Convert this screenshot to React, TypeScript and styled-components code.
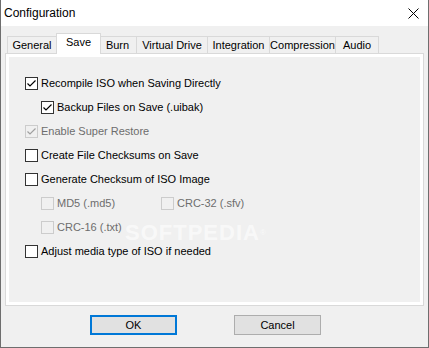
import React from "react";
import styled, {createGlobalStyle} from "styled-components";

const Global = createGlobalStyle`
  body {
    margin: 0;
    background: #f0f0f0;
    font-family: "Liberation Sans", Arial, sans-serif;
  }
`;

const Window = styled.div`
  width: 429px;
  height: 348px;
  box-sizing: border-box;
  border: 1px solid #6e6e6e;
  border-top: none;
  background: #f0f0f0;
  display: flex;
  flex-direction: column;
`;

const TitleBar = styled.div`
  height: 26px;
  background: #fff;
  display: flex;
  align-items: center;
  justify-content: space-between;
  padding: 0 9px 0 3px;
  font-size: 12px;
  color: #000;
`;

const Body = styled.div`
  padding: 7px 4px 0 4px;
  display: flex;
  flex-direction: column;
`;

const TabRow = styled.div`
  display: flex;
  align-items: flex-end;
  height: 20px;
  padding-left: 2px;
  position: relative;
  z-index: 1;
`;

const Tab = styled.div<{ $w: number; $active?: boolean }>`
  box-sizing: border-box;
  width: ${p => p.$w}px;
  height: ${p => (p.$active ? 21 : 17)}px;
  margin: ${p => (p.$active ? '0 -2px 0 -2px' : '0')};
  margin-bottom: ${p => (p.$active ? '-1px' : '0')};
  border: 1px solid #d9d9d9;
  border-bottom: none;
  background: ${p => (p.$active ? '#fff' : '#f0f0f0')};
  position: relative;
  z-index: ${p => (p.$active ? 2 : 1)};
  font-size: 11px;
  line-height: 16px;
  text-align: center;
  color: #000;
  white-space: nowrap;
  & + & {
    margin-left: ${p => (p.$active ? '-3px' : '-1px')};
  }
`;

const Panel = styled.div`
  height: 253px;
  box-sizing: border-box;
  border: 1px solid #d9d9d9;
  background: #fff;
  padding: 3px;
`;

const Page = styled.div`
  height: 100%;
  background: #f0f0f0;
  padding: 14px 0 0 16px;
  box-sizing: border-box;
  position: relative;
`;

const Row = styled.div<{ $indent?: number }>`
  display: flex;
  align-items: center;
  height: 24px;
  padding-left: ${p => p.$indent || 0}px;
  position: relative;
  z-index: 1;
`;

const Option = styled.label<{ $disabled?: boolean; $w?: number }>`
  display: flex;
  align-items: center;
  gap: 3px;
  width: ${p => (p.$w ? `${p.$w}px` : 'auto')};
  font-size: 11px;
  color: ${p => (p.$disabled ? '#6d6d6d' : '#000')};
  white-space: nowrap;
`;

const Box = styled.span<{ $disabled?: boolean }>`
  width: 13px;
  height: 13px;
  box-sizing: border-box;
  border: 1px solid ${p => (p.$disabled ? '#cccccc' : '#333333')};
  background: ${p => (p.$disabled ? '#f0f0f0' : '#fff')};
  display: inline-flex;
  align-items: center;
  justify-content: center;
  flex-shrink: 0;
`;

const Watermark = styled.div`
  position: absolute;
  left: 116px;
  top: 166px;
  font-size: 22px;
  line-height: 20px;
  font-weight: bold;
  letter-spacing: 1px;
  color: rgba(255, 255, 255, 0.6);
  pointer-events: none;
  sup {
    font-size: 8px;
    font-weight: normal;
    vertical-align: top;
  }
`;

const ButtonRow = styled.div`
  display: flex;
  gap: 57px;
  padding: 9px 0 0 85px;
`;

const Button = styled.button<{ $default?: boolean }>`
  width: 87px;
  height: 20px;
  box-sizing: border-box;
  border: ${p => (p.$default ? '2px solid #0078d7' : '1px solid #adadad')};
  background: #e1e1e1;
  font-family: "Liberation Sans", Arial, sans-serif;
  font-size: 11px;
  color: #000;
  padding: 0;
`;

const CheckBox = ({checked, disabled}: { checked?: boolean; disabled?: boolean }) => (
    <Box $disabled={disabled}>
        {checked && (
            <svg width="11" height="11" viewBox="0 0 11 11">
                <polyline points="1.5,5.5 4,8 9.5,2.5" fill="none"
                          stroke={disabled ? '#a0a0a0' : '#000'} strokeWidth="1.2"/>
            </svg>
        )}
    </Box>
);

const tabs: [string, number][] = [
    ['General', 50],
    ['Save', 45],
    ['Burn', 39],
    ['Virtual Drive', 72],
    ['Integration', 63],
    ['Compression', 67],
    ['Audio', 44],
];

const App = () => (
    <>
        <Global/>
        <Window>
            <TitleBar>
                <span>Configuration</span>
                <svg width="11" height="11" viewBox="0 0 11 11">
                    <path d="M0.5 0.5 L10.5 10.5 M10.5 0.5 L0.5 10.5" stroke="#000" strokeWidth="1"/>
                </svg>
            </TitleBar>
            <Body>
                <TabRow>
                    {tabs.map(([name, w]) => (
                        <Tab key={name} $w={w} $active={name === 'Save'}>{name}</Tab>
                    ))}
                </TabRow>
                <Panel>
                    <Page>
                        <Watermark>SOFTPEDIA<sup>®</sup></Watermark>
                        <Row>
                            <Option><CheckBox checked/>Recompile ISO when Saving Directly</Option>
                        </Row>
                        <Row $indent={16}>
                            <Option><CheckBox checked/>Backup Files on Save (.uibak)</Option>
                        </Row>
                        <Row>
                            <Option $disabled><CheckBox checked disabled/>Enable Super Restore</Option>
                        </Row>
                        <Row>
                            <Option><CheckBox/>Create File Checksums on Save</Option>
                        </Row>
                        <Row>
                            <Option><CheckBox/>Generate Checksum of ISO Image</Option>
                        </Row>
                        <Row $indent={16}>
                            <Option $disabled $w={120}><CheckBox disabled/>MD5 (.md5)</Option>
                            <Option $disabled><CheckBox disabled/>CRC-32 (.sfv)</Option>
                        </Row>
                        <Row $indent={16}>
                            <Option $disabled><CheckBox disabled/>CRC-16 (.txt)</Option>
                        </Row>
                        <Row>
                            <Option><CheckBox/>Adjust media type of ISO if needed</Option>
                        </Row>
                    </Page>
                </Panel>
                <ButtonRow>
                    <Button $default>OK</Button>
                    <Button>Cancel</Button>
                </ButtonRow>
            </Body>
        </Window>
    </>
);

export default App;
